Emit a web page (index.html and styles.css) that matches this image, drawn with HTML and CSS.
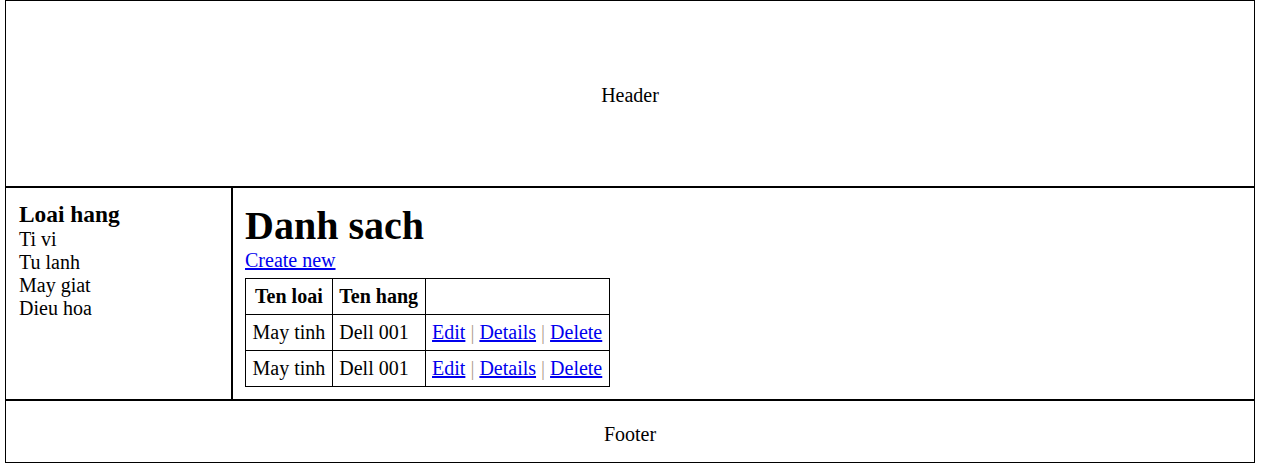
FILE: index.html
```html
<!DOCTYPE html>
<html>
<head>
<meta charset="utf-8">
<title>Danh sach</title>
<link rel="stylesheet" href="styles.css">
</head>
<body>
<div class="page">
  <div class="header">Header</div>
  <div class="middle">
    <div class="sidebar">
      <h3 class="side-title">Loai hang</h3>
      <div class="side-item">Ti vi</div>
      <div class="side-item">Tu lanh</div>
      <div class="side-item">May giat</div>
      <div class="side-item">Dieu hoa</div>
    </div>
    <div class="main">
      <h1 class="title">Danh sach</h1>
      <a class="create" href="#">Create new</a>
      <table class="grid">
        <tr>
          <th>Ten loai</th>
          <th>Ten hang</th>
          <th></th>
        </tr>
        <tr>
          <td>May tinh</td>
          <td>Dell 001</td>
          <td><a href="#">Edit</a> <span class="sep">|</span> <a href="#">Details</a> <span class="sep">|</span> <a href="#">Delete</a></td>
        </tr>
        <tr>
          <td>May tinh</td>
          <td>Dell 001</td>
          <td><a href="#">Edit</a> <span class="sep">|</span> <a href="#">Details</a> <span class="sep">|</span> <a href="#">Delete</a></td>
        </tr>
      </table>
    </div>
  </div>
  <div class="footer">Footer</div>
</div>
</body>
</html>
```

FILE: styles.css
```css
html, body {
  margin: 0;
  padding: 0;
  background: #fff;
}
body {
  font-family: "Liberation Serif", "Times New Roman", serif;
  font-size: 20px;
  color: #000;
}
.page {
  width: 1250px;
  margin-left: 5px;
}
.header {
  box-sizing: border-box;
  height: 187px;
  border: 1px solid #000;
  padding-top: 4px;
  display: flex;
  align-items: center;
  justify-content: center;
}
.middle {
  display: flex;
}
.sidebar {
  box-sizing: border-box;
  width: 227px;
  border: 1px solid #000;
  padding: 13px 13px 12px;
}
.side-title {
  margin: 0;
  font-size: 1.17em;
  font-weight: bold;
}
.main {
  flex: 1;
  border: 1px solid #000;
  padding: 14px 12px 12px;
}
.title {
  margin: 0;
  font-size: 2em;
  font-weight: bold;
}
.create {
  display: block;
  width: max-content;
}
a {
  color: #0000ee;
}
.grid {
  border-collapse: collapse;
  margin-top: 6px;
}
.grid th, .grid td {
  border: 1px solid #000;
  padding: 6px 6.5px;
}
.grid th {
  text-align: center;
  font-weight: bold;
}
.grid td {
  text-align: left;
}
.sep {
  color: #b0a090;
}
.footer {
  box-sizing: border-box;
  height: 63px;
  border: 1px solid #000;
  padding-top: 6px;
  display: flex;
  align-items: center;
  justify-content: center;
}
```
